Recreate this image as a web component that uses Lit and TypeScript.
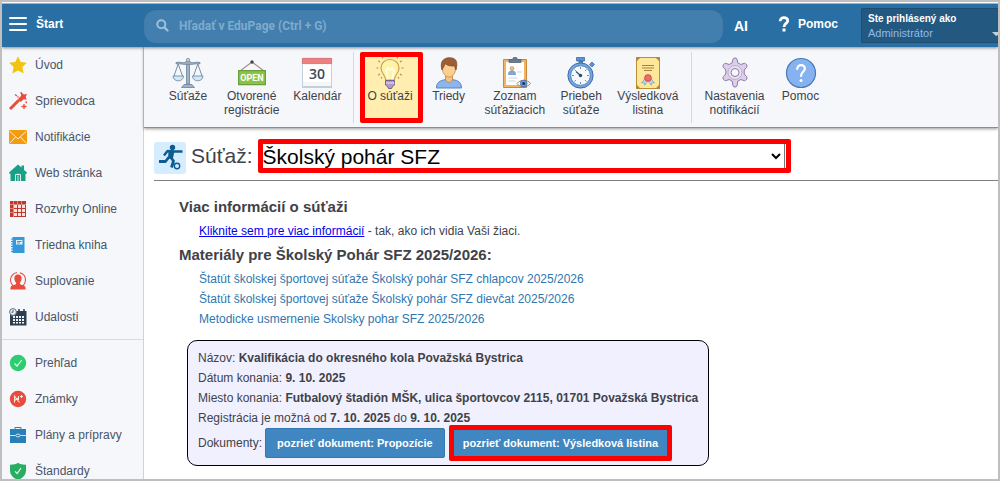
import { LitElement, html, css, svg } from "lit";
import { customElement } from "lit/decorators.js";
import { classMap } from "lit/directives/class-map.js";

/* Sidebar icons, 18x18 grid */
const side = {
  star: svg`<path fill="#f1c40f" d="M9 .2 11.7 6l6.2.8-4.5 4.3 1.2 6.4L9 14.4l-5.6 3.1 1.2-6.4L.1 6.8 6.3 6z"/>`,
  wand: svg`<path stroke="#e74c3c" stroke-width="3" d="M1 17 10 8"/><path fill="#e74c3c" d="m9 7 3-3 .4-3.500 2.500 2L18 2l-1.300 2.800 1 3-3-.6-3 2.800z"/><path stroke="#e74c3c" stroke-width="1.300" d="M6 2.500l2 1.500M12.200 0v2M15 12v5M12.500 14.500h5M16.500 9.500l1.500 1.500M8.500 4.500l1 1"/>`,
  mail: svg`<rect y="2" width="18" height="14" fill="#f39c12"/><path fill="none" stroke="#fdeed3" stroke-width="1" d="m.5 3 8.500 8 8.500-8M.5 15.500 6.500 9M17.500 15.500 11.500 9"/>`,
  home: svg`<path fill="#16a085" d="M9 .5 12.500 3.500V1.500h2.500V6l2.800 2.300v1.500h-1.300V17H1.500V9.800H.3V8.300z"/><path fill="none" stroke="#d9efea" d="M6.500 17v-6.500h5V17M9 12v5"/><circle cx="9" cy="10.500" r="1" fill="#d9efea"/>`,
  grid: svg`<path fill="#c0392b" d="M1 1h16v16H1z"/><path fill="#f7e3e1" d="M5 5h3v3H5zM9 5h3v3H9zM13 5h3v3h-3zM5 9h3v3H5zM9 9h3v3H9zM13 9h3v3h-3zM5 13h3v3H5zM9 13h3v3H9zM13 13h3v3h-3z"/><path stroke="#e6aaa4" stroke-width=".7" d="M4.500 1v16M8.500 1v3M12.500 1v3M1 4.500h16M1 8.500h3M1 12.500h3"/>`,
  book: svg`<path fill="#3498db" d="M3.500 1h12v16h-12z"/><path fill="#e3f1fb" d="M7 4h6.500v4.500H7z"/><path stroke="#3498db" d="M8 5.500h4.500M8 7h3"/><path stroke="#3498db" stroke-width="1" d="M2 3h2M2 5.500h2M2 8h2M2 10.500h2M2 13h2M2 15.500h2"/>`,
  person: svg`<circle cx="9" cy="8" r="7.500" fill="none" stroke="#e74c3c" stroke-width="1.100" stroke-dasharray="34 3"/><path fill="#e74c3c" d="M9 2.500c2.600 0 3.800 1.700 3.600 4.300-.2 2-.9 3.200-1.700 4v1.200c1 1 4.600 1.200 5.300 2.800.3.700.4 1.500.4 2.700H1.400c0-1.200.1-2 .4-2.700.7-1.600 4.300-1.800 5.300-2.800v-1.200c-.8-.8-1.500-2-1.700-4C5.200 4.200 6.400 2.500 9 2.500z"/>`,
  events: svg`<path fill="#2c3e50" d="M1 3h16.500v14.500H1z"/><path stroke="#2c3e50" stroke-width="1.500" d="M10 1v3M15 1v3"/><path fill="#f2f4f6" d="M4 8h2v2H4zM7 8h2v2H7zM10 8h2v2h-2zM13 8h2v2h-2zM4 11h2v2H4zM7 11h2v2H7zM10 11h2v2h-2zM13 11h2v2h-2zM4 14h2v1.500H4zM7 14h2v1.500H7zM10 14h2v1.500h-2zM13 14h2v1.500h-2z"/><circle cx="4" cy="4" r="3.400" fill="#eef1f4" stroke="#5d6d7c" stroke-width="1"/><path fill="none" stroke="#2c3e50" stroke-width=".8" d="M4 2v2.300H2.500"/>`,
  check: svg`<circle cx="9" cy="9" r="8.200" fill="#2ecc71"/><path fill="none" stroke="#e5f9ee" stroke-width="1.200" d="m5.500 9.500 2.500 2.500L12.800 6"/>`,
  grade: svg`<circle cx="9" cy="9" r="8.200" fill="#e74c3c"/><path fill="none" stroke="#fbe4e1" stroke-width="1.100" d="M5.500 12.500V6l5 6.500M5.500 10.500 9.500 8M9.500 6v4M12.500 5v3M11 6.500h3"/>`,
  brief: svg`<path fill="none" stroke="#2980b9" d="M6 3.500V1.500h6v2"/><path fill="#2980b9" d="M1 3h16v14H1z"/><path fill="none" stroke="#d3e5f1" d="M1 9.500h5.500M11.500 9.500H17"/><ellipse cx="9" cy="9.500" rx="2.200" ry="1.400" fill="none" stroke="#d3e5f1"/>`,
  shield: svg`<path fill="#27ae60" d="M9 .8c2.200 1.500 4.500 2 8 1.900v6c0 4.500-3.500 7.500-8 9.300C4.500 16.200 1 13.200 1 8.700v-6c3.500.1 5.800-.4 8-1.900z"/><path fill="none" stroke="#e2f5ea" stroke-width="1.200" d="m6 9.300 2.200 2.200L12 6"/>`,
};

/* Toolbar icons, 32x32 grid */
const tool = {
  scales: svg`<path fill="#9fb3c5" stroke="#6b8299" stroke-width=".8" d="M14.500 4.500h3V27h-3z"/><path fill="#9fb3c5" stroke="#6b8299" stroke-width=".8" d="M9.500 30.500 12 27.500h8l2.500 3z"/><path fill="#9fb3c5" stroke="#6b8299" stroke-width=".8" d="M4 5.500c4-1 7 .8 9.500 0 .5-1.500 1-2 2.500-2s2 .5 2.500 2C21 6.300 24 4.500 28 5.500v1.300c-4-.6-7 1-10 .5h-4c-3 .5-6-1.100-10-.5z"/><circle cx="16" cy="3" r="1.700" fill="#c5d2de" stroke="#6b8299" stroke-width=".7"/><path fill="none" stroke="#6b8299" stroke-width=".9" d="M6.200 7 2 19M6.200 7l4.300 12M25.800 7l-4.300 12M25.800 7 30 19"/><path fill="#cfe9f8" stroke="#6b8299" stroke-width=".8" d="M1 19h10.500c0 3-2.300 4.800-5.200 4.800S1 22 1 19zM20.500 19H31c0 3-2.300 4.800-5.200 4.800S20.500 22 20.500 19z"/>`,
  open: svg`<path fill="none" stroke="#b08d8d" stroke-width="1.200" d="M4 14 16 5l12 9"/><circle cx="16" cy="5" r="1.700" fill="#444"/><path fill="#8bc34a" stroke="#689f38" stroke-width="1.200" d="M2.600 13.600h26.800v14H2.600z"/><text x="16" y="24" fill="#fff" font-family="Roboto,sans-serif" font-weight="700" font-size="9" text-anchor="middle">OPEN</text>`,
  calendar: svg`<path fill="#fff" stroke="#c3d0db" d="M1.500 1.500h29v29h-29z"/><path fill="#f4f6f8" d="M2 25h28v4H2z"/><path fill="#c3d0db" d="M1 29h30v2H1z"/><path fill="#ee8080" stroke="#d46a6a" stroke-width=".8" d="M1.400 1.400h29.200v5.200H1.400z"/><text x="16" y="22" fill="#3b4a5c" font-family="Open Sans,sans-serif" font-weight="600" font-size="14" text-anchor="middle">30</text>`,
  bulb: svg`<path fill="#fff3a8" stroke="#cfa04f" stroke-width="1.200" d="M16 2.500c5.500 0 9 3.700 9 8.600 0 5.200-4.500 6.900-4.700 11.900h-8.600C11.500 18 7 16.300 7 11.100 7 6.200 10.500 2.500 16 2.500z"/><path fill="none" stroke="#fffdf0" stroke-width="1.500" d="M14 22 12 13l2-2 2 2 2-2 2 2-2 9"/><path fill="#b29bc8" stroke="#75618d" stroke-width="1" d="M11.500 23.500h9V28l-2 1.500-1 2h-3l-1-2-2-1.500z"/><path stroke="#e4dbee" stroke-width="1.100" d="M12 26h8.500"/><path stroke="#b98d45" stroke-width="1.200" d="M4.500 11h-2M29.500 11h-2M6 5 4.300 3.800M26 5l1.700-1.200M6 17l-1.700 1.200M26 17l1.700 1.200M9 1.500 8.300.3M23 1.500l.7-1.200M8 20l-1 1.500M24 20l1 1.500"/>`,
  pupil: svg`<path fill="#8bb5ec" stroke="#4d7fbd" stroke-width=".9" d="M3.500 31c0-5.500 3-7.500 9.500-8.500h6c6.500 1 9.500 3 9.500 8.500z"/><path fill="#f6c27d" stroke="#bd8746" stroke-width=".8" d="M12.500 17h7v6c-2 3-5 3-7 0z"/><path fill="#fbcf90" stroke="#c08d4b" stroke-width=".8" d="M9.500 8c0-4 3-5.500 6.500-5.500S22.500 4 22.500 8v4c0 5-3.500 8-6.500 8s-6.500-3-6.500-8z"/><path fill="#9c5e35" stroke="#7b4524" stroke-width=".7" d="M9 13c-1.500-5-.8-9 2.500-11C14.500 0 21 .3 22.800 3.200 24.500 6 23.800 10 23 13c-.8-1-1-2.500-1.200-4-4 .3-7.500-.5-9.800-2.500-.5 3-2 4-3 6.500z"/>`,
  list: svg`<path fill="#efb565" stroke="#c88a3a" d="M4.500 2.500h23v28h-23z"/><path fill="#fff" d="M7 5h18v23H7z"/><path fill="#6a7b91" stroke="#4b5a6f" stroke-width=".7" d="M10 5.500V2.500h3.500L14.500.5h3l1 2H22v3z"/><circle cx="13" cy="11.500" r="2" fill="#f3bd75" stroke="#b97f39" stroke-width=".5"/><path fill="#7da9e2" stroke="#4d7fbd" stroke-width=".6" d="M9.500 17.500c0-2.500 1-3.500 3.500-3.500s3.500 1 3.500 3.500z"/><path stroke="#c9d3dc" stroke-width="1" d="M18 15h5M9.500 21h9M9.500 24h7"/><path fill="#fff" stroke="#8a7860" stroke-width=".9" d="M18 26.500c3-4 10-4.500 13.500 0-3.500 4.500-10.500 4.500-13.500 0z"/><circle cx="24.700" cy="26.500" r="3.400" fill="#6b9bd5" stroke="#3d6ea8" stroke-width=".8"/><circle cx="24.700" cy="26.500" r="1.500" fill="#1f3552"/>`,
  watch: svg`<path fill="#5e91cf" stroke="#3d6ca8" stroke-width=".8" d="M11.500.5h8v3.500h-8zM14 4h3.500v3H14zM24.500 7.500 27 5l2.500 2.500L27 10z"/><circle cx="15.500" cy="18.500" r="12.600" fill="#73a4dd" stroke="#3d6ca8" stroke-width="1"/><circle cx="15.500" cy="18.500" r="9.800" fill="#f3f9fd" stroke="#4a7ab5" stroke-width=".8"/><path stroke="#526b85" stroke-width=".8" d="M15.500 10v2M15.500 25v2M7 18.500h2M22 18.500h2M9.500 12.500l1.400 1.400M20.100 23.100l1.400 1.400M21.500 12.500l-1.400 1.400M9.500 24.500l1.400-1.400"/><path stroke="#34495e" stroke-width="1.200" d="m15.500 18.500-4.500-4"/><circle cx="15.500" cy="18.500" r="1.700" fill="#34495e"/>`,
  diploma: svg`<path fill="#ffe79a" stroke="#b98f35" d="M4.500.5h23v31h-23z"/><path fill="#b58a2c" d="M4 0h5L4 5zM28 0v5l-5-5zM4 32v-5l5 5zM28 32h-5l5-5z"/><path stroke="#a58443" stroke-width="1.100" d="M10 8.500h12M10 11h12M12 13.500h8"/><path fill="#b8d9ef" stroke="#6a94b5" stroke-width=".6" d="M13.500 21 9.500 26l2.500-.3.800 2.600 3.200-5 3.200 5 .8-2.600 2.500.3-4-5z"/><circle cx="16" cy="21" r="3.400" fill="#ee6b6b" stroke="#c14848" stroke-width=".8"/>`,
  gear: svg`<path fill="#dccfe9" stroke="#8d78a8" stroke-width="1" stroke-linejoin="round" d="M14 2.200c0-1.600 4-1.600 4 0l.8 3.600 3 1.700 3.600-1.200c1.500-.4 3.500 3 2.300 4l-2.500 2.700v4l2.500 2.700c1.200 1-.8 4.400-2.300 4l-3.600-1.200-3 1.700-.8 4.600c0 1.600-4 1.600-4 0l-.8-4.600-3-1.700-3.600 1.200c-1.500.4-3.500-3-2.300-4L6.800 17v-4l-2.500-2.700c-1.200-1 .8-4.400 2.300-4l3.600 1.200 3-1.700z"/><circle cx="16" cy="15.500" r="7" fill="#e8dff1" stroke="#a492bb" stroke-width=".6"/><circle cx="16" cy="15.500" r="4" fill="#f6f7f9" stroke="#8d78a8" stroke-width="1"/>`,
  help: svg`<circle cx="16" cy="16" r="14.500" fill="#86b3ef" stroke="#4a78ba" stroke-width="1.200"/><path fill="none" stroke="#fff" stroke-width="2.200" stroke-linecap="round" d="M12.200 12c0-5.300 8-5 7.700-.2-.2 3-3.900 3.300-3.900 7.200"/><circle cx="16" cy="23.500" r="1.500" fill="#fff"/>`,
};

const sidebar = [
  [
    [side.star, "Úvod"],
    [side.wand, "Sprievodca"],
    [side.mail, "Notifikácie"],
    [side.home, "Web stránka"],
    [side.grid, "Rozvrhy Online"],
    [side.book, "Triedna kniha"],
    [side.person, "Suplovanie"],
    [side.events, "Udalosti"],
  ],
  [
    [side.check, "Prehľad"],
    [side.grade, "Známky"],
    [side.brief, "Plány a prípravy"],
    [side.shield, "Štandardy"],
  ],
];

const toolbar = [
  [
    [tool.scales, ["Súťaže"]],
    [tool.open, ["Otvorené", "registrácie"]],
    [tool.calendar, ["Kalendár"]],
  ],
  [
    [tool.bulb, ["O súťaži"]],
    [tool.pupil, ["Triedy"]],
    [tool.list, ["Zoznam", "súťažiacich"]],
    [tool.watch, ["Priebeh", "súťaže"]],
    [tool.diploma, ["Výsledková", "listina"]],
  ],
  [
    [tool.gear, ["Nastavenia", "notifikácií"]],
    [tool.help, ["Pomoc"]],
  ],
];

@customElement("edu-header")
export class EduHeader extends LitElement {
  static styles = css`
    :host { display: block; position: relative; z-index: 1; }
    * { box-sizing: border-box; }
    .bar {
      display: flex; align-items: center; height: 43px; background: #2a6fa4;
      box-shadow: 0 1px 3px rgba(0, 0, 0, 0.45); color: #fff;
    }
    button { font: inherit; color: inherit; background: none; border: 0; padding: 0; text-align: left; }
    .start { display: flex; align-items: center; gap: 8px; width: 142px; padding: 0 0 3px 6px; font-weight: 700; font-size: 12px; line-height: 18px; }
    .start svg { width: 20px; height: 14px; }
    .search {
      flex: 1; display: flex; align-items: center; gap: 10px; height: 34px; padding: 0 12px;
      border-radius: 12px; background: #437fae; box-shadow: inset 0 1px 1px rgba(0, 0, 0, 0.2);
    }
    .search svg { width: 13px; height: 13px; flex: none; }
    .search input { flex: 1; min-width: 0; padding: 0; border: 0; background: none; outline: 0; color: #fff; font: 700 12px/16px Roboto, Arial, sans-serif; }
    .search input::placeholder { color: #7fabcd; opacity: 1; }
    .ai { margin-left: 11px; font-size: 14px; font-weight: 700; }
    .help { display: flex; align-items: center; gap: 8px; margin: 0 23px 0 30px; padding-bottom: 3px; font-size: 12px; font-weight: 700; }
    .help svg { width: 12px; height: 16px; }
    .user {
      display: flex; align-items: flex-end; justify-content: space-between; width: 137px; height: 35px; padding: 3px 0 2px 6px;
      background: #235880; border: 1px solid #1e4d72; border-right: 0; border-radius: 2px 0 0 2px;
      font-size: 11px; line-height: 14px;
    }
    .who { display: flex; flex-direction: column; }
    .who strong { font-size: 10px; }
    .who span { color: #8fbbe8; }
    .user svg { width: 6px; height: 4px; margin-bottom: 4px; }
  `;
  render() {
    return html`
      <header class="bar">
        <button class="start">
          <svg viewBox="0 0 20 14"><path stroke="#fff" stroke-width="2" stroke-linecap="round" d="M2 1h16M2 7h16M2 13h16" /></svg>
          Štart
        </button>
        <label class="search">
          <svg viewBox="0 0 13 13"><circle cx="5.300" cy="5.300" r="4" fill="none" stroke="#9cc0dc" stroke-width="2" /><path stroke="#9cc0dc" stroke-width="2.400" stroke-linecap="round" d="m8.500 8.500 3 3" /></svg>
          <input type="search" aria-label="Hľadať" placeholder="Hľadať v EduPage (Ctrl + G)" />
        </label>
        <button class="ai">AI</button>
        <button class="help">
          <svg viewBox="0 0 12 16"><path fill="none" stroke="#fff" stroke-width="2.800" d="M2.200 5.200C2 .4 10 .6 9.700 4.800 9.500 7.500 6 7.300 6 11" /><path fill="#fff" d="M4.500 12.500h3v3h-3z" /></svg>
          Pomoc
        </button>
        <button class="user">
          <span class="who"><strong>Ste prihlásený ako</strong><span>Administrátor</span></span>
          <svg viewBox="0 0 6 4"><path fill="#c5cfd8" d="M0 0h6v3L4 4z" /></svg>
        </button>
      </header>
    `;
  }
}

@customElement("edu-sidebar")
export class EduSidebar extends LitElement {
  static styles = css`
    :host { display: block; background: #f5f7fa; border-right: 1px solid #cfd2d6; }
    ul { list-style: none; margin: 0; padding: 0; }
    .group + .group { margin-top: 4px; padding-top: 5px; border-top: 1px solid #d8dbdf; }
    a { display: flex; align-items: center; gap: 8px; height: 36px; padding-left: 7px; color: #4a5468; text-decoration: none; font-size: 12px; white-space: nowrap; }
    svg { width: 18px; height: 18px; flex: none; }
  `;
  render() {
    return html`<nav>
      ${sidebar.map(
        (group) => html`<ul class="group">
          ${group.map(([icon, label]) => html`<li><a href="#"><svg viewBox="0 0 18 18" fill="none">${icon}</svg>${label}</a></li>`)}
        </ul>`
      )}
    </nav>`;
  }
}

@customElement("edu-toolbar")
export class EduToolbar extends LitElement {
  static styles = css`
    :host { display: block; }
    * { box-sizing: border-box; }
    .bar { display: flex; height: 81px; padding: 5px 15px 4px; background: #f5f7fa; border-bottom: 1px solid #858e96; box-shadow: 0 1px 3px rgba(0, 0, 0, 0.4); }
    .group { display: flex; }
    .group + .group { margin-left: 5px; padding-left: 6px; border-left: 1px solid #d5d9de; }
    button {
      position: relative; display: flex; flex-direction: column; align-items: center; min-width: 58px; padding: 5px 7px 0;
      border: 0; background: none; color: #3d434c; font: 12px/14px "Liberation Sans", Arial, sans-serif; text-align: center; white-space: nowrap;
    }
    button svg { width: 32px; height: 32px; flex: none; }
    button span { display: block; }
    .active { background: #ffeeb0; }
    .active::after { content: ""; position: absolute; inset: 0 -3px 0 0; border: 5px solid #f00; border-radius: 2px; }
  `;
  render() {
    return html`<div class="bar">
      ${toolbar.map(
        (group) => html`<div class="group">
          ${group.map(
            ([icon, lines]: any) => html`<button class=${classMap({ active: lines[0] === "O súťaži" })}>
              <svg viewBox="0 0 32 32" fill="none">${icon}</svg>
              ${lines.map((line: string) => html`<span>${line}</span>`)}
            </button>`
          )}
        </div>`
      )}
    </div>`;
  }
}

@customElement("app-root")
export class AppRoot extends LitElement {
  static styles = css`
    :host {
      display: flex; flex-direction: column; box-sizing: border-box; height: 100vh; overflow: hidden;
      border: 2px solid #bfbfbf; background: #fff; color: #3f4248;
      font: 12px/20px "Liberation Sans", Arial, sans-serif;
    }
    * { box-sizing: border-box; }
    .strip { flex: none; height: 2px; background: linear-gradient(#fff 50%, #e9a9b4 50%); }
    .body { flex: 1; display: grid; grid-template-columns: 142px 1fr; min-height: 0; }
    .page { min-width: 0; }
    .title { display: flex; align-items: center; gap: 5px; margin: 14px 0 0 10px; padding-bottom: 6px; border-bottom: 1px solid #808080; }
    .title svg { width: 32px; height: 32px; flex: none; }
    .title label, .pick { margin-bottom: 4px; }
    .title label { font-size: 21px; line-height: 28px; }
    .pick { position: relative; flex: 0 1 527px; min-width: 0; }
    .pick::after { content: ""; position: absolute; inset: -4px -6px -4px 0; border: 5px solid #f00; border-radius: 2px; pointer-events: none; }
    select { display: block; width: 100%; height: 26px; padding: 0; border: 1px solid #767676; background: #fff; color: #000; font: 21px/24px "Liberation Sans", Arial, sans-serif; }
    .content { padding: 14px 10px 0 35px; }
    h2 { margin: 0; font-size: 15px; line-height: 24px; }
    .lines { margin: 0; padding: 2px 0 2px 20px; list-style: none; }
    .more { color: #0000ee; }
    .lines .doc { color: #3276ae; text-decoration: none; }
    .card { width: fit-content; margin: 9px 0 0 8px; padding: 7px 10px; border: 1px solid #000; border-radius: 10px; background: #f0f0ff; }
    .card p { margin: 0; }
    .card .docs { display: flex; align-items: center; gap: 3px; }
    .docs .buttons { display: flex; gap: 6px; }
    .docs button { position: relative; height: 30px; padding: 0 11px; border: 1px solid #3378b0; border-radius: 2px; background: #4086c0; color: #fff; font: 700 11px/20px "Liberation Sans", Arial, sans-serif; }
    .docs .marked::after { content: ""; position: absolute; inset: -4px -3px; border: 5px solid #f00; border-radius: 2px; }
  `;
  render() {
    return html`
      <div class="strip"></div>
      <edu-header></edu-header>
      <div class="body">
        <edu-sidebar></edu-sidebar>
        <main class="page">
          <edu-toolbar></edu-toolbar>
          <div class="title">
            <svg viewBox="0 0 32 32" fill="none">
              <rect width="32" height="32" rx="3" fill="#d6edff" />
              <circle cx="18.500" cy="5.500" r="2.700" fill="#0d5c91" />
              <path stroke="#0d5c91" stroke-width="2.400" stroke-linejoin="round" d="M28.500 9.500h-8l-7-.5-3.500 4.500" />
              <path fill="#0d5c91" d="m14.500 8.500 6 .5-1.500 7-5 1z" />
              <path stroke="#0d5c91" stroke-width="2.800" stroke-linejoin="round" d="m15 15-3.500 4.500H5M16.500 15l3 4-2 6.500" />
              <circle cx="23" cy="24" r="2.700" stroke="#0d5c91" stroke-width="1.400" />
            </svg>
            <label for="contest">Súťaž:</label>
            <div class="pick">
              <select id="contest"><option>Školský pohár SFZ</option></select>
            </div>
          </div>
          <div class="content">
            <h2>Viac informácií o súťaži</h2>
            <p class="lines"><a class="more" href="#">Kliknite sem pre viac informácií</a> - tak, ako ich vidia Vaši žiaci.</p>
            <h2>Materiály pre Školský Pohár SFZ 2025/2026:</h2>
            <ul class="lines">
              <li><a class="doc" href="#">Štatút školskej športovej súťaže Školský pohár SFZ chlapcov 2025/2026</a></li>
              <li><a class="doc" href="#">Štatút školskej športovej súťaže Školský pohár SFZ dievčat 2025/2026</a></li>
              <li><a class="doc" href="#">Metodicke usmernenie Skolsky pohar SFZ 2025/2026</a></li>
            </ul>
            <section class="card">
              <p>Názov: <b>Kvalifikácia do okresného kola Považská Bystrica</b></p>
              <p>Dátum konania: <b>9. 10. 2025</b></p>
              <p>Miesto konania: <b>Futbalový štadión MŠK, ulica športovcov 2115, 01701 Považská Bystrica</b></p>
              <p>Registrácia je možná od <b>7. 10. 2025</b> do <b>9. 10. 2025</b></p>
              <div class="docs">
                Dokumenty:
                <div class="buttons">
                  <button>pozrieť dokument: Propozície</button>
                  <button class="marked">pozrieť dokument: Výsledková listina</button>
                </div>
              </div>
            </section>
          </div>
        </main>
      </div>
    `;
  }
}
